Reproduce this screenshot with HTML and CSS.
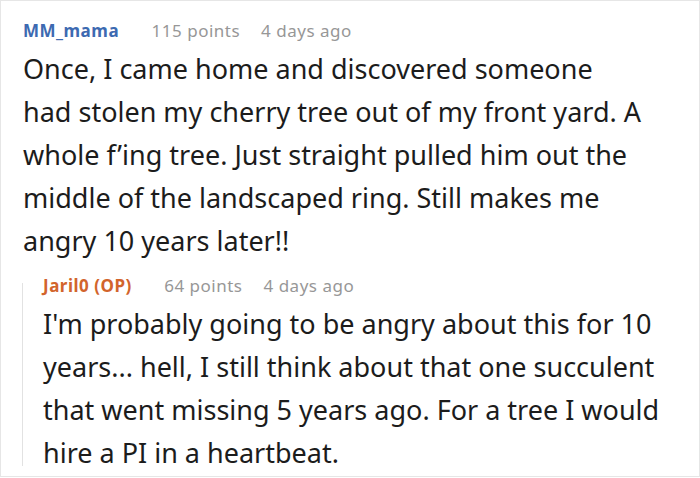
FILE: index.html
```html
<!DOCTYPE html>
<html>
<head><link rel="stylesheet" href="styles.css"></head>
<body>
<div class="box">
  <div class="comment">
    <div class="meta"><span class="user">MM_mama</span><span class="info">115 points</span><span class="info">4 days ago</span></div>
    <p class="text first">Once, I came home and discovered someone had stolen my cherry tree out of my front yard. A whole f’ing tree. Just straight pulled him out the middle of the landscaped ring. Still makes me angry 10 years later!!</p>
  </div>
  <div class="reply">
    <div class="meta"><span class="user op">Jaril0 (OP)</span><span class="info">64 points</span><span class="info">4 days ago</span></div>
    <p class="text">I'm probably going to be angry about this for 10 years... hell, I still think about that one succulent that went missing 5 years ago. For a tree I would hire a PI in a heartbeat.</p>
  </div>
</div>
</body>
</html>
```
FILE: styles.css
```css
html, body { margin: 0; padding: 0; background: #fff; }
.box {
  width: 700px; height: 477px; box-sizing: border-box;
  border: 1px solid #e6e6e6;
  padding: 17.5px 20px 0 22px;
  font-family: "Noto Sans", sans-serif;
}
.meta { font-size: 17px; line-height: 24px; letter-spacing: 0.5px; display: flex; }
.user { color: #3d6ab1; font-weight: bold; margin-right: 32.5px; }
.op { color: #d2642c; }
.info { color: #979797; margin-right: 21px; }
.text { margin: 4px 0 0 0; font-size: 27px; line-height: 43px; color: #1c1c1c; }
.first { width: 621px; }
.reply { position: relative; margin: 12.5px 0 0 -1px; padding-left: 21px; }
.reply::before {
  content: ""; position: absolute; left: 0; top: 9px; bottom: 8px;
  width: 1px; background: #e2e2e2;
}
```
